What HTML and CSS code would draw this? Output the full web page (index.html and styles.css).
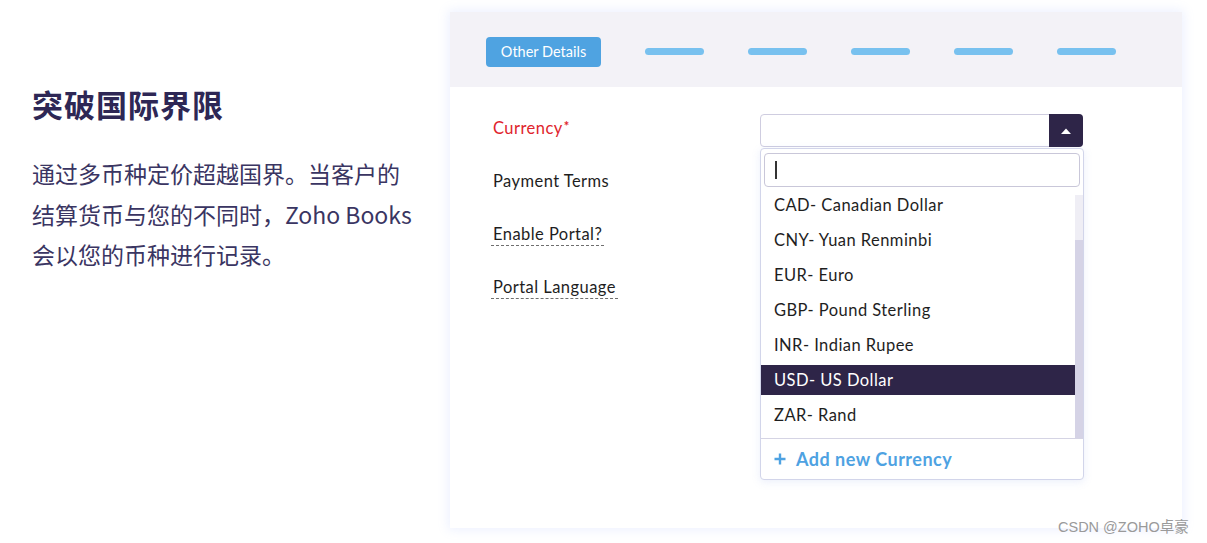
FILE: index.html
```html
<!DOCTYPE html>
<html lang="zh">
<head>
<meta charset="utf-8">
<link rel="stylesheet" href="styles.css">
</head>
<body>
<div class="page">
  <section class="intro">
    <h1 class="intro-title">突破国际界限</h1>
    <p class="intro-text">通过多币种定价超越国界。当客户的<br>结算货币与您的不同时，Zoho Books<br>会以您的币种进行记录。</p>
  </section>
  <section class="card">
    <div class="card-head">
      <span class="tab-active">Other Details</span>
      <span class="tab-dash"></span>
      <span class="tab-dash"></span>
      <span class="tab-dash"></span>
      <span class="tab-dash"></span>
      <span class="tab-dash"></span>
    </div>
    <div class="card-body">
      <div class="form-row">
        <div class="label label-req">Currency<sup>*</sup></div>
        <div class="field">
          <div class="select">
            <span class="select-btn"><svg width="12" height="8" viewBox="0 0 12 8"><path d="M1 7 L6 1.5 L11 7 Z" fill="#fff"/></svg></span>
            <div class="menu">
              <div class="menu-search"><span class="caret"></span></div>
              <div class="menu-list">
                <ul class="options">
                  <li class="option">CAD- Canadian Dollar</li>
                  <li class="option">CNY- Yuan Renminbi</li>
                  <li class="option">EUR- Euro</li>
                  <li class="option">GBP- Pound Sterling</li>
                  <li class="option">INR- Indian Rupee</li>
                  <li class="option option-sel">USD- US Dollar</li>
                  <li class="option">ZAR- Rand</li>
                </ul>
                <div class="scrollbar"><div class="scroll-thumb"></div></div>
              </div>
              <div class="menu-foot">
                <svg class="plus" width="12" height="12" viewBox="0 0 12 12"><path d="M6 0.5 V11.5 M0.5 6 H11.5" stroke="#4ea2e2" stroke-width="2.4"/></svg>
                <span>Add new Currency</span>
              </div>
            </div>
          </div>
        </div>
      </div>
      <div class="form-row">
        <div class="label">Payment Terms</div>
      </div>
      <div class="form-row">
        <div class="label"><span class="dotted">Enable Portal?</span></div>
      </div>
      <div class="form-row">
        <div class="label"><span class="dotted">Portal Language</span></div>
      </div>
    </div>
  </section>
</div>
<div class="watermark">CSDN @ZOHO卓豪</div>
</body>
</html>
```

FILE: styles.css
```css
* { box-sizing: border-box; }
html, body { margin: 0; padding: 0; }
body {
  width: 1207px;
  height: 543px;
  overflow: hidden;
  background: #fff;
  font-family: "Lato", "Noto Sans CJK SC", sans-serif;
  position: relative;
}
.page {
  display: flex;
  align-items: flex-start;
}
.intro {
  width: 450px;
  padding: 84px 0 0 32px;
  font-family: "Noto Sans CJK SC", sans-serif;
}
.intro-title {
  margin: 0;
  font-size: 31px;
  letter-spacing: 1px;
  line-height: 40px;
  font-weight: 700;
  color: #2e2755;
}
.intro-text {
  margin: 29px 0 0;
  font-size: 23px;
  line-height: 40.5px;
  color: #3a3562;
}
.card {
  margin-top: 12px;
  width: 732px;
  height: 516px;
  background: #fff;
  box-shadow: 0 0 10px 2px rgba(140, 170, 255, 0.16);
}
.card-head {
  height: 75px;
  background: #f3f2f7;
  display: flex;
  align-items: center;
  padding: 4px 0 0 36px;
}
.tab-active {
  width: 115px;
  height: 30px;
  border-radius: 4px;
  background: #4fa3e1;
  color: #fff;
  font-size: 14.5px;
  display: flex;
  align-items: center;
  justify-content: center;
  margin-right: 44px;
}
.tab-dash {
  width: 59px;
  height: 7px;
  border-radius: 4px;
  background: #78c1ef;
  margin-right: 44px;
}
.card-body {
  padding: 27px 0 0 43px;
  display: flex;
  flex-direction: column;
  gap: 21px;
}
.form-row {
  display: flex;
  height: 32px;
  align-items: flex-start;
}
.label {
  width: 267px;
  font-size: 16.5px;
  letter-spacing: 0.45px;
  line-height: 28px;
  color: #1e1e1e;
}
.label-req { color: #e0242c; }
.label-req sup {
  font-size: 13px;
  font-weight: 700;
  vertical-align: 3px;
  line-height: 0;
  margin-left: 1px;
}
.dotted {
  display: inline-block;
  line-height: 22px;
  margin-left: -2px;
  padding: 0 2px 0 2px;
  border-bottom: 1px dashed #6f6f6f;
}
.field { width: 323px; }
.select {
  position: relative;
  height: 33px;
  border: 1px solid #cfcde0;
  border-radius: 4px;
  display: flex;
  justify-content: flex-end;
}
.select-btn {
  width: 34px;
  height: 33px;
  margin: -1px -1px 0 0;
  background: #2e2548;
  border-radius: 0 4px 4px 0;
  display: flex;
  align-items: center;
  justify-content: center;
}
.menu {
  position: absolute;
  left: -1px;
  top: 33px;
  width: 324px;
  background: #fff;
  border: 1px solid #d2d5ea;
  border-radius: 4px;
  box-shadow: 0 2px 8px rgba(120, 150, 230, 0.15);
}
.menu-search {
  margin: 4px 3px 0 3px;
  height: 34px;
  border: 1px solid #c9c7d9;
  border-radius: 4px;
  padding: 7px 0 0 10px;
}
.caret {
  display: block;
  width: 1.5px;
  height: 18px;
  background: #333;
}
.menu-list {
  display: flex;
  height: 251px;
  border-bottom: 1px solid #d5d4e4;
  margin-top: 1px;
}
.options {
  list-style: none;
  margin: 0;
  padding: 0;
  flex: 1;
}
.option {
  height: 30px;
  margin-top: 5px;
  padding-left: 13px;
  font-size: 16.5px;
  letter-spacing: 0.45px;
  line-height: 30px;
  color: #1e1e1e;
}
.option:first-child { margin-top: 2px; }
.option-sel {
  background: #2e2548;
  color: #fff;
}
.scrollbar {
  width: 8px;
  margin-top: 7px;
  background: #efeef5;
  display: flex;
  flex-direction: column;
  justify-content: flex-end;
}
.scroll-thumb {
  height: 198px;
  background: #d5d3e6;
}
.menu-foot {
  height: 40px;
  display: flex;
  align-items: center;
  gap: 10px;
  padding-left: 13px;
  color: #4ea2e2;
  font-size: 18px;
  letter-spacing: 0.5px;
  font-weight: 700;
}
.watermark {
  position: absolute;
  left: 1058px;
  top: 515px;
  font-family: "Liberation Sans", "Noto Sans CJK SC", sans-serif;
  font-size: 14.5px;
  color: #9a9a9a;
}
```
